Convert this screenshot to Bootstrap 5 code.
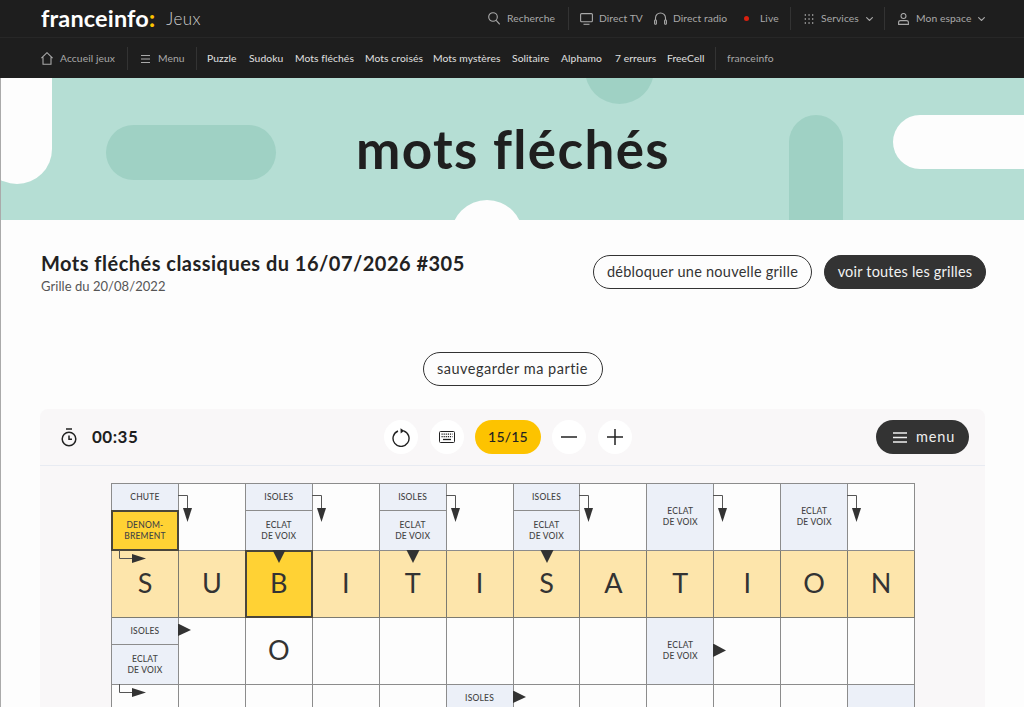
<!DOCTYPE html>
<html lang="fr">
<head>
<meta charset="utf-8">
<title>Mots fléchés</title>
<link href="https://cdn.jsdelivr.net/npm/bootstrap@5.3.0/dist/css/bootstrap.min.css" rel="stylesheet">
<style>
html,body{height:707px;overflow:hidden;background:#fdfdfd}
body{font-family:"Lato","Liberation Sans",sans-serif;color:#222}
.fi-defs{position:absolute;width:0;height:0}
.fi-top{background:#1e1e1e;height:78px;color:#a9a9a9;font-size:10.3px;letter-spacing:.08px}
.fi-top span{white-space:nowrap}
.fi-r1{height:38px;padding:0 39px 0 41px;border-bottom:1px solid #272727}
.fi-r2{height:40px;padding:1px 0 0 41px}
.fi-logo{color:#fff;font-size:23.5px;font-weight:700;line-height:1;letter-spacing:.15px}
.fi-logo b{color:#fdc300}
.fi-jeux{color:#cfcfcf;font-size:17px;font-weight:300;margin-left:11px;letter-spacing:.4px}
.fi-sep{width:1px;height:23px;background:#333;flex:none}
.fi-ico{fill:none;stroke:#a9a9a9;stroke-width:1.1;display:block;flex:none}
.fi-dot{width:5px;height:5px;border-radius:50%;background:#d9200f;flex:none}
.fi-link{color:#e0e0e0}
.l6{margin-left:6px}.l7{margin-left:7px}.l8{margin-left:8px}.l10{margin-left:10px}.l11{margin-left:11px}.l12{margin-left:12px}.l13{margin-left:13px}.l16{margin-left:16px}
.t18{width:18px}.t26{width:26px}.t30{width:30px}.t34{width:34px}.t36{width:36px}.t37{width:37px}.t40{width:40px}.t42{width:42px}.t43{width:43px}.t48{width:48px}.t49{width:49px}.t55{width:55px}.t56{width:56px}.t58{width:58px}.t67{width:67px}
.fi-shell{border-left:1px solid #aaa;height:629px;overflow:hidden}
.fi-banner{height:142px;background:#b5ded4;overflow:hidden}
.fi-shape{position:absolute}
.fi-a{background:#9fd1c4}.fi-w{background:#fdfdfd}
.s1{left:-19px;top:-40px;width:70px;height:146px;border-radius:35px}
.s2{left:105px;top:47px;width:170px;height:55px;border-radius:27.5px}
.s3{left:584px;top:-43px;width:69px;height:69px;border-radius:50%}
.s4{left:788px;top:37px;width:54px;height:140px;border-radius:27px}
.s5{left:892px;top:37px;width:170px;height:54px;border-radius:27px}
.s6{left:450px;top:122px;width:72px;height:72px;border-radius:50%}
.fi-banner h1{font-size:53px;font-weight:700;color:#1f1f1f;letter-spacing:1.35px;margin:0;line-height:142px;padding-left:1px}
.fi-head{padding:30px 38px 0 40px}
.fi-title{font-size:20px;font-weight:700;letter-spacing:.48px;margin:0;line-height:26px;color:#222}
.fi-sub{font-size:13px;color:#555;line-height:18px;letter-spacing:.05px;margin-top:1px}
.fi-acts{padding-top:5px;gap:12px}
.fi-btn{height:34px;border-radius:17px;border:1px solid #333;background:#fdfdfd;color:#333;font-size:14.5px;line-height:32px;padding:0;letter-spacing:.25px;text-align:center}
.fi-btn.w1{width:219px}
.fi-btn.w3{width:180px;letter-spacing:.5px}
.fi-btn.w2{width:162px;background:#333;color:#f2f2f2;letter-spacing:.2px}
.fi-save{margin-top:57px}
.fi-panel{margin:23px 39px 0 39px;background:#f9f7f8;border-radius:8px 8px 0 0;height:300px}
.fi-bar{height:57px;border-bottom:1px solid #e8ebf2;padding:0 16px 0 21px}
.fi-left{width:323px}
.fi-time{font-size:17px;font-weight:700;color:#1e1e1e;letter-spacing:.5px;margin-left:15px}
.fi-round{width:34px;height:34px;border-radius:50%;background:#fff;border:0;padding:0}
.fi-count{width:66px;height:34px;border-radius:17px;background:#fdc300;color:#222;font-size:14px;font-weight:500;line-height:34px;text-align:center;letter-spacing:.2px;margin:0 -1px}
.fi-tools{gap:12px}
.fi-menu{width:93px;height:34px;border-radius:17px;background:#333;color:#eee;font-size:14.5px;letter-spacing:.85px;gap:9px;border:0;padding:0 0 0 3px}
.fi-grid{display:grid;grid-template-columns:repeat(12,66.93px);grid-auto-rows:67px;width:804.2px;margin:17px 0 0 71px;border-top:1px solid #8c8c8c;border-left:1px solid #8c8c8c;background:#fdfdfd}
.fi-cell{position:relative;border-right:1px solid #8c8c8c;border-bottom:1px solid #8c8c8c;display:flex;align-items:center;justify-content:center;font-size:27px;line-height:1;color:#333;padding-bottom:3px}
.fi-on{background:#fde5ab;border-color:#7c7a70}
.fi-cur{background:#ffd234}
.fi-cur::after,.fi-split .fi-act::after{content:"";position:absolute;inset:-1px;border:2px solid #4a463a;z-index:1}
.fi-clue{background:#ecf0f8;font-size:8.5px;font-weight:500;color:#444;line-height:10.6px;text-align:center;letter-spacing:.2px;padding-bottom:0}
.fi-split{flex-direction:column;align-items:stretch;justify-content:flex-start;background:#ecf0f8;padding-bottom:0}
.fi-split div{display:flex;align-items:center;justify-content:center;font-size:8.5px;font-weight:500;color:#444;line-height:10.6px;text-align:center;letter-spacing:.2px}
.fi-t1{height:27px;border-bottom:1px solid #8c8c8c;flex:none}
.fi-t2{flex:1}
.fi-split .fi-act{background:#ffd234;position:relative}
.fi-arr{position:absolute;left:-1px;top:-1px;width:40px;height:40px;z-index:2;overflow:visible;pointer-events:none}
.fi-arr.mid{left:13px}
</style>
</head>
<body>
<svg class="fi-defs">
<symbol id="elbd" viewBox="0 0 40 40"><path d="M0 12.500H9.500V25" fill="none" stroke="#555" stroke-width="1"/><path d="M5 25H14L9.500 39Z" fill="#333"/></symbol>
<symbol id="elbr" viewBox="0 0 40 40"><path d="M8.500 0V8.500H21" fill="none" stroke="#555" stroke-width="1"/><path d="M21 4H21L35 8.500 21 13Z" fill="#333"/></symbol>
<symbol id="trid" viewBox="0 0 40 40"><path d="M13.500 0H26.500L20 13Z" fill="#333"/></symbol>
<symbol id="trr" viewBox="0 0 40 40"><path d="M0 7H1L13 13 0 19Z" fill="#333"/></symbol>
<symbol id="trm" viewBox="0 0 40 40"><path d="M0 27H1L13 33.500 0 40Z" fill="#333"/></symbol>
</svg>

<header class="fi-top">
  <div class="fi-r1 d-flex align-items-center">
    <span class="fi-logo">franceinfo<b>:</b></span><span class="fi-jeux">Jeux</span>
    <div class="ms-auto d-flex align-items-center">
      <svg class="fi-ico" width="12" height="13" viewBox="0 0 12 13"><circle cx="5" cy="5" r="4.300"/><path d="M8.200 8.300 11.700 12.300"/></svg><span class="l7 t49">Recherche</span>
      <span class="fi-sep l12"></span>
      <svg class="fi-ico l11" width="13" height="12" viewBox="0 0 13 12"><rect x=".6" y=".6" width="11.800" height="8.200" rx="1"/><path d="M3.500 11.300H9.500"/></svg><span class="l6 t42">Direct TV</span>
      <svg class="fi-ico l13" width="13" height="13" viewBox="0 0 13 13"><path d="M1.500 8V6a5 5 0 0 1 10 0V8"/><rect x=".6" y="8" width="1.800" height="4.300" rx=".8"/><rect x="10.600" y="8" width="1.800" height="4.300" rx=".8"/></svg><span class="l6 t55">Direct radio</span>
      <span class="fi-dot l16"></span><span class="l11 t18">Live</span>
      <span class="fi-sep l12"></span>
      <svg class="fi-ico l13" width="10" height="10" viewBox="0 0 10 10"><path d="M.7 1h1.300M4.400 1h1.300M8 1h1.300M.7 5h1.300M4.400 5h1.300M8 5h1.300M.7 9h1.300M4.400 9h1.300M8 9h1.300" stroke-width="1.500"/></svg><span class="l7 t37">Services</span>
      <svg class="fi-ico l8" width="7" height="4" viewBox="0 0 7 4"><path d="M.3.300 3.500 3.500 6.700.3"/></svg>
      <span class="fi-sep l11"></span>
      <svg class="fi-ico l13" width="11" height="12" viewBox="0 0 11 12"><circle cx="5.500" cy="3" r="2.500"/><path d="M.6 11.400V9.500Q.6 7.600 2.600 7.600H8.400Q10.400 7.600 10.400 9.500V11.400Z"/></svg><span class="l7 t55">Mon espace</span>
      <svg class="fi-ico l7" width="7" height="4" viewBox="0 0 7 4"><path d="M.3.300 3.500 3.500 6.700.3"/></svg>
    </div>
  </div>
  <nav class="fi-r2 d-flex align-items-center">
    <svg class="fi-ico" width="12" height="13" viewBox="0 0 12 13"><path d="M.4 6.200 6 .7 11.600 6.200M2 5.200V12.300H10V5.200"/></svg><span class="l7 t55">Accueil jeux</span>
    <span class="fi-sep l12"></span>
    <svg class="fi-ico l13" width="9" height="8" viewBox="0 0 9 8"><path d="M0 .5H9M0 4H9M0 7.500H9"/></svg><span class="l8 t26">Menu</span>
    <span class="fi-sep l12"></span>
    <div class="d-flex align-items-center fi-link l10">
      <span class="t30">Puzzle</span><span class="l12 t34">Sudoku</span><span class="l12 t58">Mots fléchés</span><span class="l12 t56">Mots croisés</span><span class="l12 t67">Mots mystères</span><span class="l12 t37">Solitaire</span><span class="l12 t43">Alphamo</span><span class="l11 t40">7 erreurs</span><span class="l12 t36">FreeCell</span>
    </div>
    <span class="fi-sep l12"></span><span class="l11 t48">franceinfo</span>
  </nav>
</header>

<div class="fi-shell">
  <section class="fi-banner position-relative text-center">
    <span class="fi-shape fi-w s1"></span>
    <span class="fi-shape fi-a s2"></span>
    <span class="fi-shape fi-a s3"></span>
    <span class="fi-shape fi-a s4"></span>
    <span class="fi-shape fi-w s5"></span>
    <span class="fi-shape fi-w s6"></span>
    <h1 class="position-relative">mots fléchés</h1>
  </section>

  <section class="fi-head d-flex justify-content-between align-items-start">
    <div><h2 class="fi-title">Mots fléchés classiques du 16/07/2026 #305</h2><div class="fi-sub">Grille du 20/08/2022</div></div>
    <div class="d-flex fi-acts"><button class="btn fi-btn w1">débloquer une nouvelle grille</button><button class="btn fi-btn w2">voir toutes les grilles</button></div>
  </section>
  <div class="d-flex justify-content-center fi-save"><button class="btn fi-btn w3">sauvegarder ma partie</button></div>

  <section class="fi-panel">
    <div class="fi-bar d-flex align-items-center">
      <div class="fi-left d-flex align-items-center">
        <svg width="16" height="19" viewBox="0 0 16 19" fill="none" stroke="#222" stroke-width="1.500"><path d="M5 1H11"/><circle cx="8" cy="11" r="6.800"/><path d="M8 7.500V11.300H11"/></svg>
        <span class="fi-time">00:35</span>
      </div>
      <div class="d-flex align-items-center fi-tools">
        <button class="fi-round d-flex align-items-center justify-content-center" aria-label="recommencer"><svg width="18" height="19" viewBox="0 0 18 19" fill="none" stroke="#222" stroke-width="1.400"><path d="M11.500 2.800A8 8 0 1 1 6 3"/><path d="M8.500 .2 12.200 2.800 8.700 5.500" fill="#222" stroke="none"/></svg></button>
        <button class="fi-round d-flex align-items-center justify-content-center" aria-label="clavier"><svg width="16" height="12" viewBox="0 0 16 12" fill="none" stroke="#222"><rect x=".5" y=".5" width="15" height="11" rx="1"/><path d="M2.500 3.200H13.500M2.500 5.600H13.500" stroke-width="1.300" stroke-dasharray="1.200 .9"/><path d="M4 8.500H12" stroke-width="1.300"/></svg></button>
        <span class="fi-count">15/15</span>
        <button class="fi-round d-flex align-items-center justify-content-center" aria-label="moins"><svg width="16" height="2" viewBox="0 0 16 2" stroke="#222" stroke-width="1.500"><path d="M0 1H16"/></svg></button>
        <button class="fi-round d-flex align-items-center justify-content-center" aria-label="plus"><svg width="16" height="16" viewBox="0 0 16 16" stroke="#222" stroke-width="1.500"><path d="M0 8H16M8 0V16"/></svg></button>
      </div>
      <button class="fi-menu ms-auto d-flex align-items-center justify-content-center"><svg width="14" height="11" viewBox="0 0 14 11" stroke="#eee" stroke-width="1.300"><path d="M0 1H14M0 5.500H14M0 10H14"/></svg><span>menu</span></button>
    </div>

    <div class="fi-grid">
      <div class="fi-cell fi-split"><div class="fi-t1">CHUTE</div><div class="fi-t2 fi-act">DENOM-<br>BREMENT</div></div>
      <div class="fi-cell"><svg class="fi-arr"><use href="#elbd"/></svg></div>
      <div class="fi-cell fi-split"><div class="fi-t1">ISOLES</div><div class="fi-t2">ECLAT<br>DE VOIX</div></div>
      <div class="fi-cell"><svg class="fi-arr"><use href="#elbd"/></svg></div>
      <div class="fi-cell fi-split"><div class="fi-t1">ISOLES</div><div class="fi-t2">ECLAT<br>DE VOIX</div></div>
      <div class="fi-cell"><svg class="fi-arr"><use href="#elbd"/></svg></div>
      <div class="fi-cell fi-split"><div class="fi-t1">ISOLES</div><div class="fi-t2">ECLAT<br>DE VOIX</div></div>
      <div class="fi-cell"><svg class="fi-arr"><use href="#elbd"/></svg></div>
      <div class="fi-cell fi-clue">ECLAT<br>DE VOIX</div>
      <div class="fi-cell"><svg class="fi-arr"><use href="#elbd"/></svg></div>
      <div class="fi-cell fi-clue">ECLAT<br>DE VOIX</div>
      <div class="fi-cell"><svg class="fi-arr"><use href="#elbd"/></svg></div>

      <div class="fi-cell fi-on">S<svg class="fi-arr"><use href="#elbr"/></svg></div>
      <div class="fi-cell fi-on">U</div>
      <div class="fi-cell fi-on fi-cur">B<svg class="fi-arr mid"><use href="#trid"/></svg></div>
      <div class="fi-cell fi-on">I</div>
      <div class="fi-cell fi-on">T<svg class="fi-arr mid"><use href="#trid"/></svg></div>
      <div class="fi-cell fi-on">I</div>
      <div class="fi-cell fi-on">S<svg class="fi-arr mid"><use href="#trid"/></svg></div>
      <div class="fi-cell fi-on">A</div>
      <div class="fi-cell fi-on">T</div>
      <div class="fi-cell fi-on">I</div>
      <div class="fi-cell fi-on">O</div>
      <div class="fi-cell fi-on">N</div>

      <div class="fi-cell fi-split"><div class="fi-t1">ISOLES</div><div class="fi-t2">ECLAT<br>DE VOIX</div></div>
      <div class="fi-cell"><svg class="fi-arr"><use href="#trr"/></svg></div>
      <div class="fi-cell">O</div>
      <div class="fi-cell"></div>
      <div class="fi-cell"></div>
      <div class="fi-cell"></div>
      <div class="fi-cell"></div>
      <div class="fi-cell"></div>
      <div class="fi-cell fi-clue">ECLAT<br>DE VOIX</div>
      <div class="fi-cell"><svg class="fi-arr"><use href="#trm"/></svg></div>
      <div class="fi-cell"></div>
      <div class="fi-cell"></div>

      <div class="fi-cell"><svg class="fi-arr"><use href="#elbr"/></svg></div>
      <div class="fi-cell"></div>
      <div class="fi-cell"></div>
      <div class="fi-cell"></div>
      <div class="fi-cell"></div>
      <div class="fi-cell fi-split"><div class="fi-t1">ISOLES</div><div class="fi-t2"></div></div>
      <div class="fi-cell"><svg class="fi-arr"><use href="#trr"/></svg></div>
      <div class="fi-cell"></div>
      <div class="fi-cell"></div>
      <div class="fi-cell"></div>
      <div class="fi-cell"></div>
      <div class="fi-cell fi-clue"></div>
    </div>
  </section>
</div>
</body>
</html>
